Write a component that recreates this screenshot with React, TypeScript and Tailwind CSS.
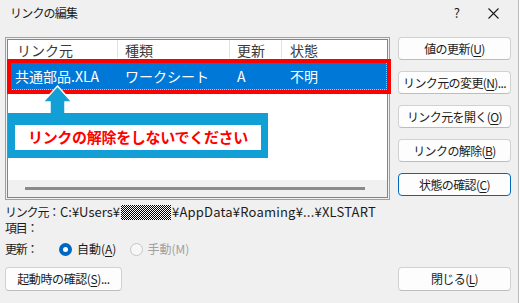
import type { ReactNode } from "react";

function Btn({ children, focused }: { children: ReactNode; focused?: boolean }) {
  return (
    <button
      className={
        "h-[23px] w-full rounded-[4px] bg-[#fdfdfd] text-[12px] leading-none tracking-[-0.6px] text-[#1b1b1b] " +
        (focused ? "border border-[#0067c0]" : "border border-[#d1d1d1] border-b-[#bdbdbd]")
      }
    >
      {children}
    </button>
  );
}

function Key({ k }: { k: string }) {
  return <span className="underline underline-offset-2">{k}</span>;
}

export default function App() {
  return (
    <div className="relative h-[303px] w-[519px] overflow-hidden border-r border-[#b9b9b9] bg-[#f0f0f0] font-['Noto_Sans_CJK_JP',sans-serif] text-[#1b1b1b]">
      {/* title bar */}
      <div className="flex h-[26px] items-center">
        <span className="pl-[10px] text-[12px] tracking-[-0.8px]">リンクの編集</span>
        <span className="ml-auto mr-[28px] text-[13px]">?</span>
        <svg width="11" height="11" viewBox="0 0 11 11" className="mr-[19px]">
          <path d="M0.5 0.5 L10.5 10.5 M10.5 0.5 L0.5 10.5" stroke="#1b1b1b" strokeWidth="1.1" />
        </svg>
      </div>

      <div className="mt-[11px] flex h-[260px] pb-[6px]">
        {/* left side */}
        <div className="ml-[5px] flex w-[385px] flex-col">
          <div className="h-[163px] border border-[#a0a0a0] p-px">
            <div className="flex h-full flex-col border border-[#858585] bg-white">
              <div className="flex h-[22px] items-start text-[14px] text-[#3a3a3a]">
                <div className="h-[18px] w-[110px] border-r border-[#e3e3e3] pl-[9px] leading-[20px]">リンク元</div>
                <div className="h-[18px] w-[112px] border-r border-[#e3e3e3] pl-[7px] leading-[20px]">種類</div>
                <div className="h-[18px] w-[52px] border-r border-[#e3e3e3] pl-[7px] leading-[20px]">更新</div>
                <div className="h-[18px] pl-[8px] leading-[20px]">状態</div>
              </div>
              <div className="flex h-[28px] items-center border border-dotted border-[#f2b27a] bg-[#0078d7] text-[14px] text-white">
                <div className="w-[109px] pl-[6px]">共通部品.XLA</div>
                <div className="w-[112px] pl-[7px]">ワークシート</div>
                <div className="w-[52px] pl-[7px]">A</div>
                <div className="pl-[8px]">不明</div>
              </div>
              <div className="mt-auto flex h-[17px] items-center bg-[#f0f0f0]">
                <div className="ml-[17px] h-[3px] w-[340px] bg-[#8a8a8a]" />
              </div>
            </div>
          </div>

          <div className="mt-[4px] flex h-[16px] items-center text-[12px]">
            <span className="w-[55px] tracking-[-1.2px]">リンク元：</span>
            <span className="text-[13px]">C:¥Users¥</span>
            <span className="mx-[1px] h-[15px] w-[50px] bg-[repeating-conic-gradient(#000_0%_25%,#fff_0%_50%)] bg-[length:2px_2px]" />
            <span className="text-[13px] tracking-[0.2px]">¥AppData¥Roaming¥...¥XLSTART</span>
          </div>
          <div className="flex h-[16px] items-center text-[12px]">
            <span className="w-[55px] tracking-[-1.2px]">項目：</span>
          </div>
          <div className="mt-[5px] flex h-[16px] items-center text-[12px]">
            <span className="w-[54px] tracking-[-1.2px]">更新：</span>
            <span className="flex h-[13px] w-[13px] items-center justify-center rounded-full bg-[#0067c0]">
              <span className="h-[5px] w-[5px] rounded-full bg-white" />
            </span>
            <span className="ml-[5px]">
              自動(<Key k="A" />)
            </span>
            <span className="ml-[14px] h-[13px] w-[13px] rounded-full border border-[#c5c5c5] bg-[#f7f7f7]" />
            <span className="ml-[4px] text-[#a0a0a0]">手動(M)</span>
          </div>

          <div className="mt-auto w-[117px]">
            <button className="h-[24px] w-full rounded-[4px] border border-[#d1d1d1] border-b-[#bdbdbd] bg-[#fdfdfd] text-[12px] tracking-[-0.4px]">
              起動時の確認(<Key k="S" />)...
            </button>
          </div>
        </div>

        {/* right side */}
        <div className="ml-[8px] flex w-[113px] flex-col">
          <div className="flex flex-col gap-[11px]">
            <Btn>
              値の更新(<Key k="U" />)
            </Btn>
            <Btn>
              リンク元の変更(<Key k="N" />)...
            </Btn>
            <Btn>
              リンク元を開く(<Key k="O" />)
            </Btn>
            <Btn>
              リンクの解除(<Key k="B" />)
            </Btn>
            <Btn focused>
              状態の確認(<Key k="C" />)
            </Btn>
          </div>
          <div className="mt-auto">
            <button className="h-[24px] w-full rounded-[4px] border border-[#d1d1d1] border-b-[#bdbdbd] bg-[#fdfdfd] text-[12px] tracking-[-0.6px]">
              閉じる(<Key k="L" />)
            </button>
          </div>
        </div>
      </div>

      {/* annotation: red frame */}
      <div className="absolute left-[7px] top-[59px] h-[35px] w-[384px] border-4 border-[#ff0000]" />

      {/* annotation: arrow */}
      <svg className="absolute left-[40px] top-[82px]" width="36" height="36" viewBox="0 0 36 36">
        <polygon
          points="17.5,4 32,20 25,20 25,34 10,34 10,20 3,20"
          fill="#129fd6"
          stroke="#ffffff"
          strokeWidth="1.5"
          strokeLinejoin="miter"
        />
      </svg>

      {/* annotation: callout */}
      <div className="absolute left-[8px] top-[113px] flex h-[45px] w-[260px] bg-[#129fd6] pb-[8px] pl-[7px] pr-[7px] pt-[12px]">
        <div className="flex flex-1 items-center justify-center bg-white text-[15px] font-bold tracking-[-0.3px] text-[#ff0000]">
          リンクの解除をしないでください
        </div>
      </div>
    </div>
  );
}
